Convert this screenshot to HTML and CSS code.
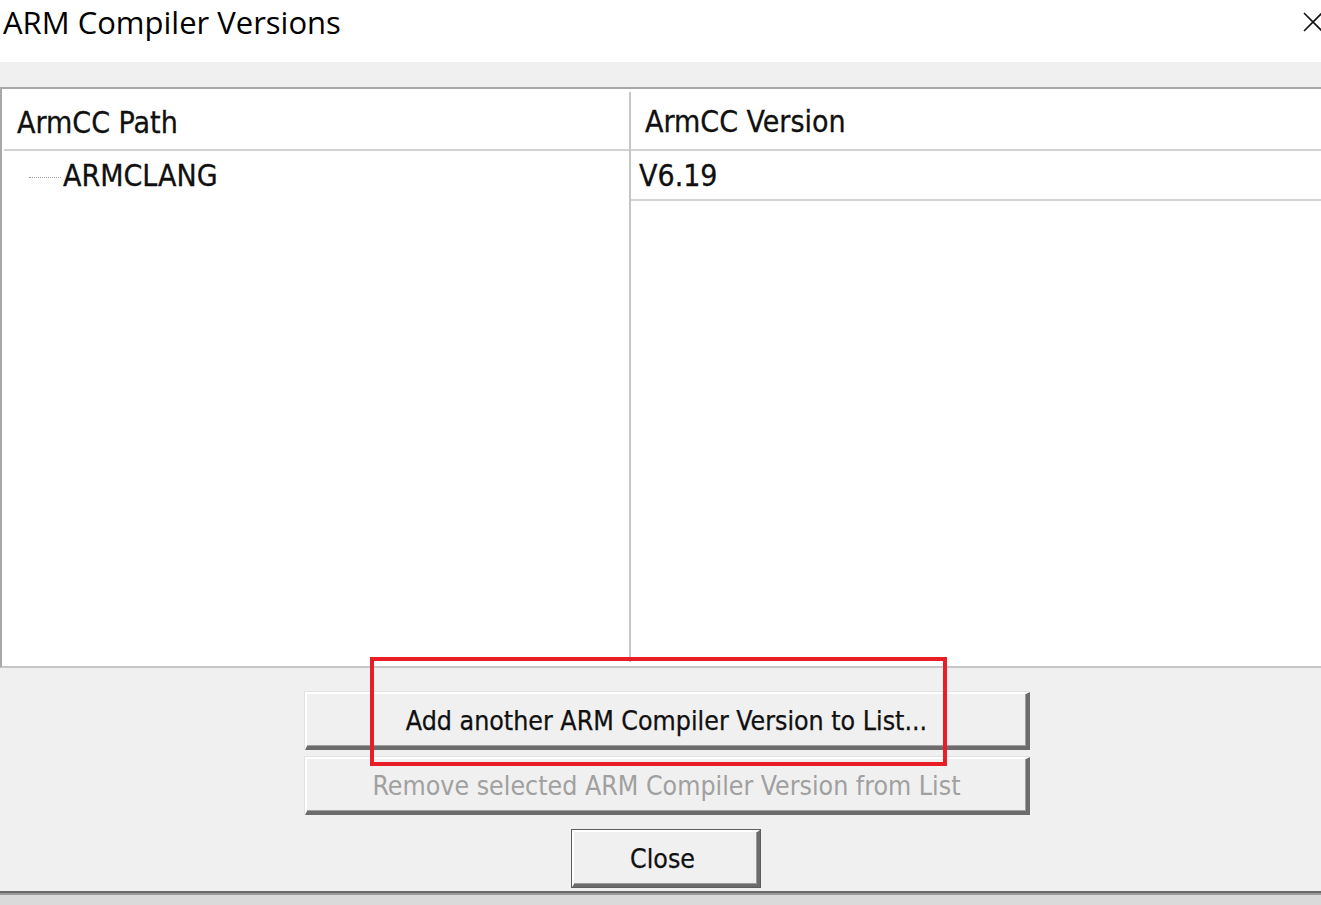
FILE: index.html
```html
<!DOCTYPE html>
<html lang="en">
<head>
<meta charset="utf-8">
<title>ARM Compiler Versions</title>
<link rel="stylesheet" href="styles.css">
</head>
<body>
<div class="window">
  <header class="titlebar">
    <h1 class="title">ARM Compiler Versions</h1>
    <svg class="close-x" width="20" height="20" viewBox="0 0 20 20" aria-hidden="true">
      <path d="M1 1 L19 19 M19 1 L1 19" stroke="#111" stroke-width="1.6" fill="none"/>
    </svg>
  </header>

  <div class="strip"></div>

  <div class="list">
    <div class="col col-path">
      <div class="head">ArmCC Path</div>
      <div class="row"><span class="dots"></span><span>ARMCLANG</span></div>
    </div>
    <div class="col col-ver">
      <div class="head">ArmCC Version</div>
      <div class="row">V6.19</div>
    </div>
  </div>

  <div class="actions">
    <button class="btn wide">Add another ARM Compiler Version to List...</button>
    <button class="btn wide disabled">Remove selected ARM Compiler Version from List</button>
    <button class="btn close default">Close</button>
  </div>

  <div class="footer"></div>

  <div class="highlight"></div>
</div>
</body>
</html>
```

FILE: styles.css
```css
html, body {
  margin: 0;
  padding: 0;
}
body {
  width: 1321px;
  height: 905px;
  overflow: hidden;
  background: #f0f0f0;
}
.window {
  position: relative;
  width: 1321px;
  height: 905px;
}
.titlebar {
  height: 62px;
  background: #ffffff;
  display: flex;
  justify-content: space-between;
  align-items: flex-start;
}
.title {
  margin: 0;
  padding: 2px 0 0 3px;
  font-family: "Open Sans", "Noto Sans", sans-serif;
  font-weight: 400;
  font-size: 31px;
  line-height: 40px;
  color: #000;
}
.close-x {
  margin-top: 12px;
  margin-right: -2px;
}
.strip {
  height: 25px;
  background: #f0f0f0;
}
.list {
  height: 577px;
  background: #fff;
  border-top: 2px solid #a8a8a8;
  border-left: 2px solid #a8a8a8;
  border-bottom: 2px solid #c6c6c6;
  display: grid;
  grid-template-columns: 627px 1fr;
  font-family: "DejaVu Sans Condensed", "DejaVu Sans", sans-serif;
  font-stretch: condensed;
  font-size: 30px;
  color: #101010;
  -webkit-text-stroke: 0.3px #101010;
}
.col-path .head {
  margin-left: 2px;
  height: 62px;
  padding-left: 13px;
  padding-top: 6px;
  box-sizing: border-box;
  display: flex;
  align-items: center;
  border-bottom: 2px solid #d2d2d2;
}
.col-path .row {
  height: 48px;
  display: flex;
  align-items: center;
  padding-left: 27px;
  padding-top: 1px;
  box-sizing: border-box;
}
.dots {
  width: 32px;
  height: 0;
  border-top: 1px dotted #9a9a9a;
  margin-top: 3px;
  margin-right: 2px;
}
.col-ver {
  margin-top: 3px;
  margin-bottom: 4px;
  border-left: 2px solid #c6c6c6;
}
.col-ver .head {
  height: 59px;
  padding-left: 14px;
  padding-top: 2px;
  box-sizing: border-box;
  display: flex;
  align-items: center;
  border-bottom: 2px solid #d2d2d2;
}
.col-ver .row {
  height: 50px;
  padding-left: 8px;
  padding-top: 1px;
  box-sizing: border-box;
  display: flex;
  align-items: center;
  border-bottom: 2px solid #d2d2d2;
}
.actions {
  padding: 24px 0 0 305px;
  width: 725px;
  display: flex;
  flex-direction: column;
  align-items: center;
}
.btn {
  font-family: "DejaVu Sans Condensed", "DejaVu Sans", sans-serif;
  font-stretch: condensed;
  font-size: 26.5px;
  color: #101010;
  -webkit-text-stroke: 0.25px currentColor;
  background: #f0f0f0;
  box-sizing: border-box;
  padding: 0;
  margin: 0;
  border-style: solid;
  border-width: 2px 4px 4px 2px;
  border-color: #ffffff #6c6c6c #6c6c6c #ffffff;
  box-shadow: -1px -1px 0 #e2e2e2, inset -1px -1px 0 #a0a0a0;
}
.wide {
  width: 725px;
  height: 58px;
}
.wide + .wide {
  margin-top: 7px;
}
.disabled {
  color: #a0a0a0;
  -webkit-text-stroke: 0;
}
.close {
  width: 188px;
  height: 57px;
  margin-top: 15px;
  margin-left: -3px;
  padding-right: 6px;
}
.default {
  border-width: 2px 3px 3px 2px;
  box-shadow: 0 0 0 1px #5e5e5e, inset -1px -1px 0 #9a9a9a;
  border-color: #ffffff #6c6c6c #6c6c6c #ffffff;
}
.footer {
  margin-top: 4px;
  height: 14px;
  border-top: 2px solid #6a6a6a;
  box-shadow: inset 0 2px 0 #9a9a9a;
  background: #dadada;
}
.highlight {
  position: absolute;
  left: 370px;
  top: 657px;
  width: 577px;
  height: 109px;
  box-sizing: border-box;
  border: 4px solid #e81d25;
  pointer-events: none;
}
```
